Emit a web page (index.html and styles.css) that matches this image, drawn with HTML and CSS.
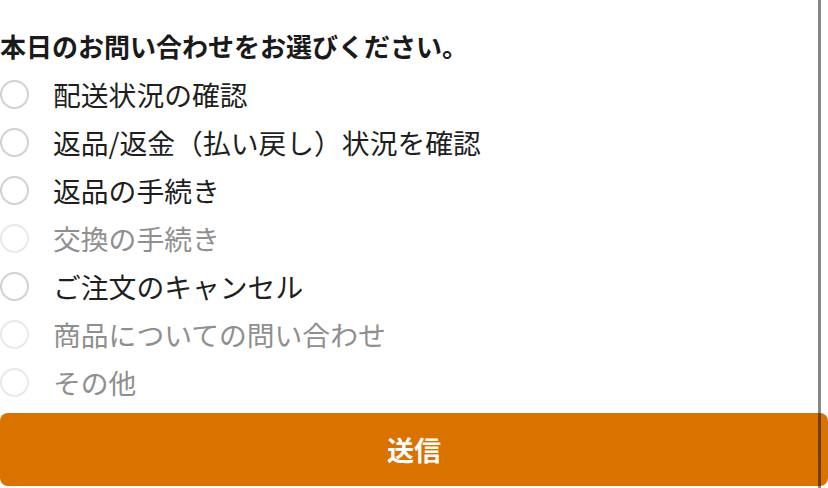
FILE: index.html
```html
<!DOCTYPE html>
<html lang="ja">
<head>
<meta charset="utf-8">
<link rel="stylesheet" href="styles.css">
</head>
<body>
<div class="page">
  <h1 class="title">本日のお問い合わせをお選びください。</h1>
  <ul class="options">
    <li class="option"><span class="radio"></span><span class="label">配送状況の確認</span></li>
    <li class="option"><span class="radio"></span><span class="label">返品/返金（払い戻し）状況を確認</span></li>
    <li class="option"><span class="radio"></span><span class="label">返品の手続き</span></li>
    <li class="option disabled"><span class="radio"></span><span class="label">交換の手続き</span></li>
    <li class="option"><span class="radio"></span><span class="label">ご注文のキャンセル</span></li>
    <li class="option disabled"><span class="radio"></span><span class="label">商品についての問い合わせ</span></li>
    <li class="option disabled"><span class="radio"></span><span class="label">その他</span></li>
  </ul>
  <button class="submit">送信</button>
  <div class="scrollbar"></div>
</div>
</body>
</html>
```

FILE: styles.css
```css
html, body {
  margin: 0;
  padding: 0;
  background: #ffffff;
}
body {
  font-family: "Noto Sans CJK JP", "Noto Sans", sans-serif;
  color: #1a1a1a;
}
.page {
  position: relative;
  width: 828px;
  height: 488px;
  padding-top: 28px;
  box-sizing: border-box;
  overflow: hidden;
}
.title {
  margin: 0;
  font-size: 26px;
  line-height: 36px;
  font-weight: 700;
  color: #1a1a1a;
}
.options {
  list-style: none;
  margin: 7px 0 0 0;
  padding: 0;
  display: flex;
  flex-direction: column;
}
.option {
  height: 48px;
  display: flex;
  align-items: center;
}
.radio {
  width: 29px;
  height: 29px;
  box-sizing: border-box;
  border: 2px solid #d2d2d2;
  border-radius: 50%;
  flex: none;
  margin-right: 24px;
  margin-top: -2px;
}
.label {
  font-size: 27.8px;
  line-height: 36px;
  color: #1f1f1f;
  margin-top: -2px;
}
.disabled .radio {
  border-color: #e9e9e9;
}
.disabled .label {
  color: #8f8f8f;
}
.submit {
  display: block;
  margin-top: 6px;
  width: 828px;
  height: 73px;
  border: none;
  border-radius: 8px;
  background: #da7200;
  color: #ffffff;
  font-family: "Noto Sans CJK JP", "Noto Sans", sans-serif;
  font-size: 27px;
  font-weight: 700;
  padding: 0;
}
.scrollbar {
  position: absolute;
  top: 0;
  left: 818px;
  width: 3px;
  height: 488px;
  background: rgba(0, 0, 0, 0.47);
}
```
